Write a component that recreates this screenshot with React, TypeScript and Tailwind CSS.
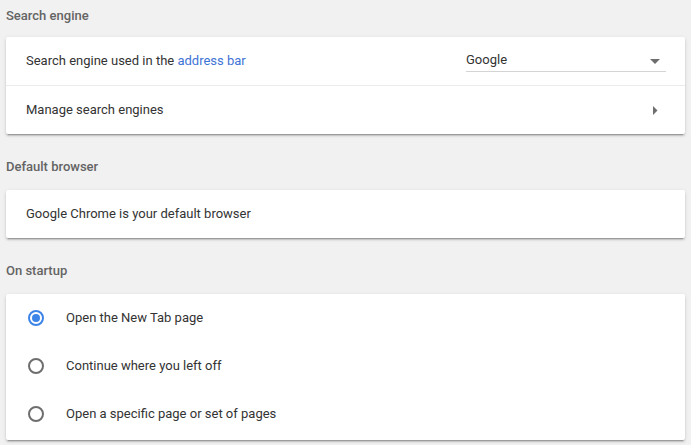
import React from 'react';

const cardClass =
  'bg-white rounded-[2px] shadow-[0_2px_2px_0_rgba(0,0,0,0.14),0_1px_4px_0_rgba(0,0,0,0.10),0_3px_1px_-2px_rgba(0,0,0,0.2)]';

const SectionTitle: React.FC<{ children: React.ReactNode; first?: boolean }> = ({ children, first }) => (
  <div
    className={`${first ? 'pt-[6px] pb-[11px]' : 'pt-[23px] pb-[13px]'} px-[6px] text-[13px] leading-[20px] font-medium text-[#646464]`}
  >
    {children}
  </div>
);

const Radio: React.FC<{ checked?: boolean }> = ({ checked }) => (
  <span
    className={`flex items-center justify-center w-[16px] h-[16px] rounded-full border-2 ${
      checked ? 'border-[#3d84e8]' : 'border-[#6e6e6e]'
    }`}
  >
    {checked && <span className="block w-[8px] h-[8px] rounded-full bg-[#3d84e8]" />}
  </span>
);

const startupOptions = [
  { label: 'Open the New Tab page', checked: true },
  { label: 'Continue where you left off', checked: false },
  { label: 'Open a specific page or set of pages', checked: false },
];

export default function App() {
  return (
    <div
      className="w-[691px] h-[445px] overflow-hidden bg-[#f1f1f1] text-[#333333] text-[13px]"
      style={{ fontFamily: 'Roboto, "Liberation Sans", Arial, sans-serif' }}
    >
      <SectionTitle first>Search engine</SectionTitle>
      <div className={`${cardClass} ml-[6px] w-[679px]`}>
        <div className="flex items-center h-[48px] pl-[20px] pr-[19px]">
          <div className="flex-1">
            Search engine used in the <span className="text-[#3e73d6]">address bar</span>
          </div>
          <div className="relative w-[200px] h-[22px] flex items-center border-b border-[#d4d4d4] mt-[-1px]">
            <span>Google</span>
            <svg className="absolute right-[6px] top-[9px]" width="10" height="5" viewBox="0 0 10 5">
              <path d="M0 0 L10 0 L5 5 Z" fill="#6e6e6e" />
            </svg>
          </div>
        </div>
        <div className="flex items-center h-[49px] pl-[20px] pr-[27px] border-t border-[#ececec]">
          <div className="flex-1">Manage search engines</div>
          <svg width="5" height="9" viewBox="0 0 5 9">
            <path d="M0 0 L4.5 4.5 L0 9 Z" fill="#6e6e6e" />
          </svg>
        </div>
      </div>

      <SectionTitle>Default browser</SectionTitle>
      <div className={`${cardClass} ml-[6px] w-[679px]`}>
        <div className="flex items-center h-[48px] pl-[20px]">Google Chrome is your default browser</div>
      </div>

      <SectionTitle>On startup</SectionTitle>
      <div className={`${cardClass} ml-[6px] w-[679px] pb-[2px]`}>
        {startupOptions.map((opt) => (
          <div key={opt.label} className="flex items-center h-[48px] pl-[22px]">
            <div className="w-[38px] flex items-center">
              <Radio checked={opt.checked} />
            </div>
            <span>{opt.label}</span>
          </div>
        ))}
      </div>
    </div>
  );
}
